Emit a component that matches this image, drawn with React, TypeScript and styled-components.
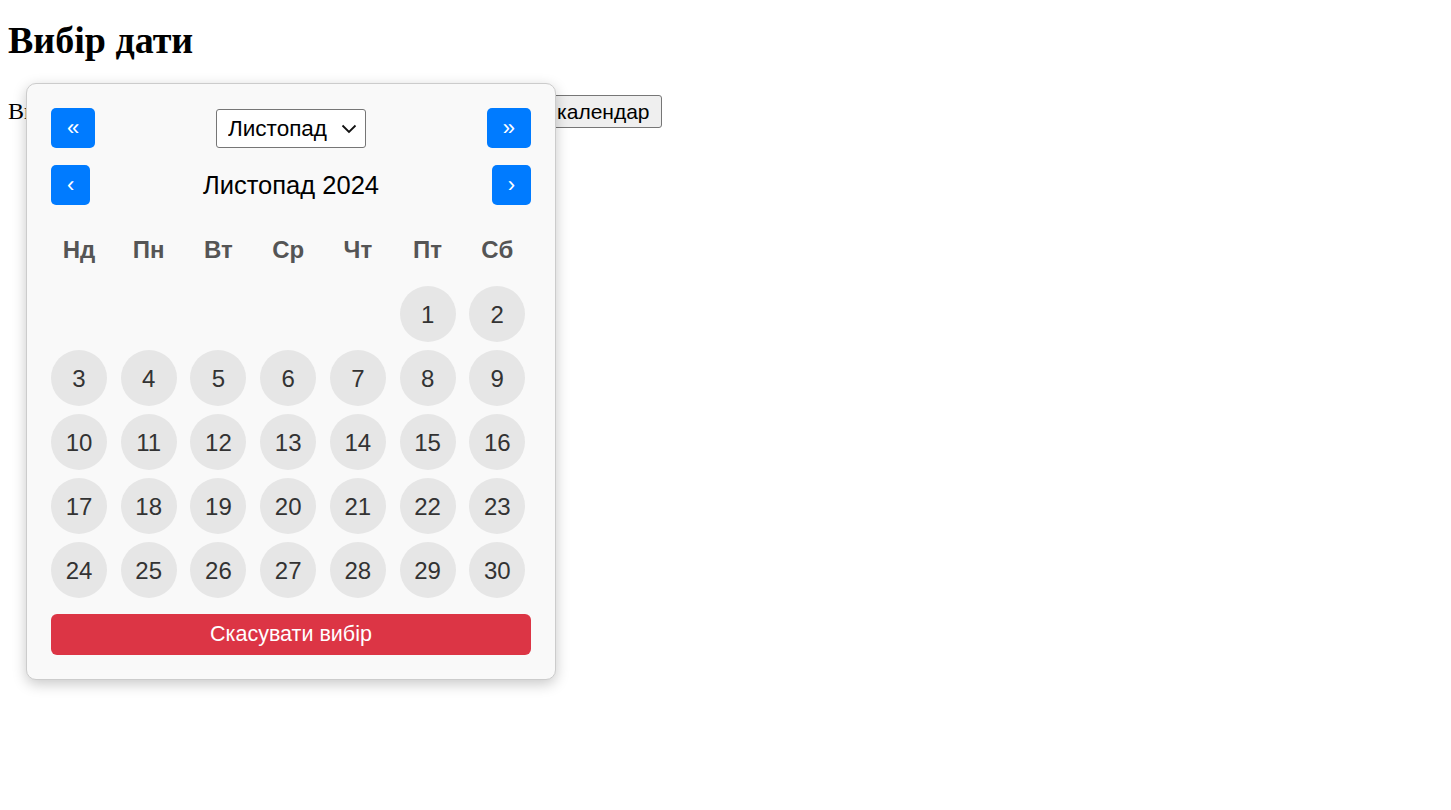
import React, { useState } from 'react'
import styled, { createGlobalStyle } from 'styled-components'

const GlobalStyle = createGlobalStyle`
  html {
    height: 100%;
  }
  body, #root {
    min-height: 100%;
  }
  body {
    margin: 8px;
    height: calc(100% - 16px);
    font-family: "Liberation Serif", "Times New Roman", serif;
    background: #fff;
    color: #000;
  }
`

const Title = styled.h1`
  font-size: 38px;
  margin: 10px 0 33px;
`

const Line = styled.div`
  position: relative;
  font-size: 24px;
  line-height: 33px;
  display: flex;
  align-items: center;
  gap: 9px;
`

const OpenButton = styled.button`
  font-family: "Liberation Sans", Arial, sans-serif;
  font-size: 21px;
  height: 33px;
  padding: 0 11px;
  background: #efefef;
  border: 1px solid #767676;
  border-radius: 3px;
  color: #000;
`

const Popup = styled.div`
  position: absolute;
  left: 18px;
  top: -12px;
  width: 530px;
  box-sizing: border-box;
  padding: 24px;
  background: #f9f9f9;
  border: 1px solid #ccc;
  border-radius: 10px;
  box-shadow: 0 4px 14px rgba(0, 0, 0, 0.22);
  font-family: "Liberation Sans", Arial, sans-serif;
  z-index: 10;
`

const HeaderRow = styled.div<{ $mb: number }>`
  display: flex;
  justify-content: space-between;
  align-items: center;
  height: 40px;
  margin-bottom: ${p => p.$mb}px;
`

const NavButton = styled.button`
  height: 40px;
  padding: 0 16px;
  background: #007bff;
  color: #fff;
  border: none;
  border-radius: 5px;
  font-family: "Liberation Sans", Arial, sans-serif;
  font-size: 22px;
  cursor: pointer;
`

const SelectWrap = styled.div`
  position: relative;
  width: 150px;
  height: 39px;
`

const MonthSelect = styled.select`
  appearance: none;
  width: 100%;
  height: 100%;
  padding: 0 0 0 11px;
  font-family: "Liberation Sans", Arial, sans-serif;
  font-size: 22.5px;
  color: #000;
  background: #fff;
  border: 1px solid #767676;
  border-radius: 3px;
`

const Chevron = styled.svg`
  position: absolute;
  right: 9px;
  top: 15px;
  pointer-events: none;
`

const MonthTitle = styled.div`
  font-size: 25.5px;
  color: #000;
`

const Grid = styled.div`
  display: grid;
  grid-template-columns: repeat(7, 1fr);
  row-gap: 8px;
  column-gap: 8px;
  margin-top: 16px;
`

const WeekDay = styled.div`
  width: 56px;
  height: 57px;
  display: flex;
  align-items: center;
  justify-content: center;
  font-size: 24px;
  font-weight: 700;
  color: #555;
`

const Day = styled.div<{ $empty?: boolean }>`
  width: 56px;
  height: 56px;
  border-radius: 50%;
  display: flex;
  align-items: center;
  justify-content: center;
  font-size: 24px;
  color: #333;
  background: ${p => (p.$empty ? 'transparent' : '#e6e6e6')};
  cursor: ${p => (p.$empty ? 'default' : 'pointer')};
`

const CancelButton = styled.button`
  display: block;
  width: 100%;
  height: 41px;
  margin-top: 16px;
  background: #dc3545;
  color: #fff;
  border: none;
  border-radius: 6px;
  font-family: "Liberation Sans", Arial, sans-serif;
  font-size: 21.5px;
  cursor: pointer;
`

const months = [
  'Січень', 'Лютий', 'Березень', 'Квітень', 'Травень', 'Червень',
  'Липень', 'Серпень', 'Вересень', 'Жовтень', 'Листопад', 'Грудень',
]
const weekDays = ['Нд', 'Пн', 'Вт', 'Ср', 'Чт', 'Пт', 'Сб']

export default function App(): JSX.Element {
  const [month, setMonth] = useState(10)
  const [year, setYear] = useState(2024)

  const firstDay = new Date(year, month, 1).getDay()
  const daysInMonth = new Date(year, month + 1, 0).getDate()
  const cells: (number | null)[] = []
  for (let i = 0; i < firstDay; i++) cells.push(null)
  for (let d = 1; d <= daysInMonth; d++) cells.push(d)

  const shiftMonth = (delta: number) => {
    const date = new Date(year, month + delta, 1)
    setMonth(date.getMonth())
    setYear(date.getFullYear())
  }

  return (
    <>
      <GlobalStyle />
      <Title>Вибір дати</Title>
      <Line>
        <span>Вибрана дата: ще не вибрано, оберіть день</span>
        <OpenButton>Відкрити календар</OpenButton>
        <Popup>
          <HeaderRow $mb={17}>
            <NavButton onClick={() => setYear(year - 1)}>«</NavButton>
            <SelectWrap>
              <MonthSelect value={month} onChange={e => setMonth(Number(e.target.value))}>
                {months.map((m, i) => (
                  <option key={m} value={i}>{m}</option>
                ))}
              </MonthSelect>
              <Chevron width="16" height="10" viewBox="0 0 16 10">
                <path d="M1.5 1.5 L8 8 L14.5 1.5" fill="none" stroke="#111" strokeWidth="1.8" />
              </Chevron>
            </SelectWrap>
            <NavButton onClick={() => setYear(year + 1)}>»</NavButton>
          </HeaderRow>
          <HeaderRow $mb={0}>
            <NavButton onClick={() => shiftMonth(-1)}>‹</NavButton>
            <MonthTitle>{months[month]} {year}</MonthTitle>
            <NavButton onClick={() => shiftMonth(1)}>›</NavButton>
          </HeaderRow>
          <Grid>
            {weekDays.map(w => (
              <WeekDay key={w}>{w}</WeekDay>
            ))}
            {cells.map((d, i) => (
              <Day key={i} $empty={d === null}>{d}</Day>
            ))}
          </Grid>
          <CancelButton>Скасувати вибір</CancelButton>
        </Popup>
      </Line>
    </>
  )
}
